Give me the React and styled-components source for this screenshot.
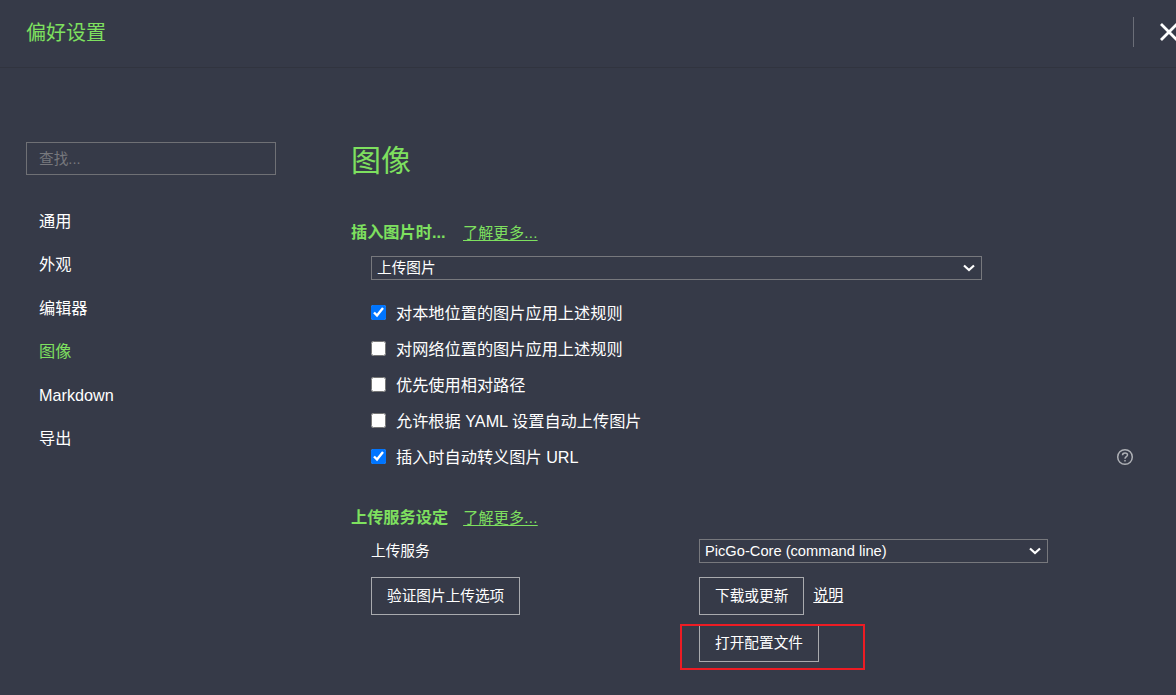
import React from 'react';
import styled, { createGlobalStyle } from 'styled-components';

const GlobalStyle = createGlobalStyle`
  html, body {
    margin: 0;
    padding: 0;
    height: 100%;
    background: #363a48;
    overflow: hidden;
  }
  body {
    font-family: "Liberation Sans", "Noto Sans CJK SC", sans-serif;
    color: #fff;
  }
`;

const green = '#7ee05f';

const chevron = `url("data:image/svg+xml,%3Csvg xmlns='http://www.w3.org/2000/svg' width='12' height='8' viewBox='0 0 12 8'%3E%3Cpath d='M1 1.5 L6 6 L11 1.5' fill='none' stroke='white' stroke-width='2.2'/%3E%3C/svg%3E")`;

const Page = styled.div`
  width: 1176px;
  height: 695px;
  position: relative;
  overflow: hidden;
  background: #363a48;
`;

const Header = styled.header`
  box-sizing: border-box;
  height: 68px;
  display: flex;
  align-items: center;
  justify-content: space-between;
  padding: 0 0 4px 26px;
  border-bottom: 1px solid #31343f;
`;

const HeaderTitle = styled.h1`
  margin: 0;
  font-size: 20px;
  font-weight: 400;
  color: ${green};
`;

const HeaderActions = styled.div`
  display: flex;
  align-items: center;
  margin-right: -5px;
`;

const Divider = styled.div`
  width: 1px;
  height: 30px;
  background: #6b6e78;
  margin-right: 23px;
`;

const CloseIcon = styled.svg`
  display: block;
  width: 24px;
  height: 24px;
`;

const Body = styled.div`
  display: flex;
`;

const Sidebar = styled.aside`
  width: 250px;
  margin-left: 26px;
  padding-top: 74px;
`;

const Search = styled.input`
  display: block;
  box-sizing: border-box;
  width: 250px;
  height: 33px;
  padding: 0 12px;
  background: transparent;
  border: 1px solid #6f7075;
  border-radius: 0;
  color: #fff;
  font: 14.67px "Liberation Sans", "Noto Sans CJK SC", sans-serif;
  outline: none;

  &::placeholder {
    color: #77787d;
    opacity: 1;
  }
`;

const Nav = styled.nav`
  margin-top: 25px;
  display: flex;
  flex-direction: column;
`;

const NavItem = styled.a`
  height: 43.4px;
  line-height: 43.4px;
  padding-left: 13px;
  font-size: 16.2px;
  color: ${props => (props.$active ? green : '#fff')};
`;

const Main = styled.main`
  width: 782px;
  margin-left: 75px;
  padding-top: 70px;
`;

const PageTitle = styled.h2`
  margin: 0;
  height: 46px;
  line-height: 46px;
  font-size: 30px;
  font-weight: 400;
  color: ${green};
`;

const SectionHeading = styled.div`
  display: flex;
  align-items: center;
  gap: 15px;
  height: 24px;
  margin-top: ${props => props.$top}px;
`;

const SectionTitle = styled.h3`
  margin: 0;
  min-width: 97px;
  font-size: 16.2px;
  font-weight: 700;
  color: ${green};
`;

const MoreLink = styled.a`
  font-size: 15px;
  letter-spacing: 0.3px;
  color: ${green};
  text-decoration: underline;
  text-underline-offset: 2px;
`;

const Indented = styled.div`
  margin-left: 20px;
`;

const Select = styled.select`
  display: block;
  box-sizing: border-box;
  width: ${props => props.$width}px;
  height: 24px;
  margin-top: ${props => props.$top || 0}px;
  padding: 0 0 0 5px;
  appearance: none;
  background: transparent ${chevron} no-repeat right 6px center;
  border: 1px solid #77787d;
  border-radius: 0;
  color: #fff;
  font: 14.67px "Liberation Sans", "Noto Sans CJK SC", sans-serif;
  outline: none;
`;

const CheckList = styled.div`
  margin-top: 15px;
  display: flex;
  flex-direction: column;
`;

const CheckRow = styled.div`
  height: 36px;
  display: flex;
  align-items: center;
  justify-content: space-between;
`;

const CheckLabel = styled.label`
  display: flex;
  align-items: center;
  gap: 10px;
  font-size: 16.2px;
  line-height: 22px;
  padding-bottom: 1px;
  color: #fff;
`;

const Checkbox = styled.input`
  width: 15px;
  height: 15px;
  margin: -1px 0 0 0;
  accent-color: #0075ff;
`;

const HelpIcon = styled.svg`
  display: block;
  width: 18px;
  height: 18px;
  margin-right: -1px;
`;

const ServiceGrid = styled.div`
  display: grid;
  grid-template-columns: 328px 349px;
  margin-top: 11px;
`;

const ServiceColumn = styled.div`
  display: flex;
  flex-direction: column;
  align-items: flex-start;
`;

const ServiceLabel = styled.div`
  height: 24px;
  line-height: 24px;
  font-size: 14.67px;
  color: #fff;
`;

const Button = styled.button`
  box-sizing: border-box;
  height: 38px;
  padding: 0 15px 3px;
  background: transparent;
  border: 1px solid #a9aaae;
  border-radius: 0;
  color: #fff;
  font: 14.67px "Liberation Sans", "Noto Sans CJK SC", sans-serif;
`;

const ButtonRow = styled.div`
  display: flex;
  align-items: center;
  gap: 9px;
  margin-top: ${props => props.$top}px;
`;

const DocLink = styled.a`
  margin-bottom: 6px;
  font-size: 15px;
  color: #fff;
  text-decoration: underline;
  text-underline-offset: 2px;
`;

// red annotation drawn over the screenshot
const Highlight = styled.div`
  position: absolute;
  left: 680px;
  top: 624px;
  width: 181px;
  height: 42px;
  border: 2px solid #ed1c24;
`;

const navItems = ['通用', '外观', '编辑器', '图像', 'Markdown', '导出'];

const imageRules = [
  { label: '对本地位置的图片应用上述规则', checked: true },
  { label: '对网络位置的图片应用上述规则', checked: false },
  { label: '优先使用相对路径', checked: false },
  { label: '允许根据 YAML 设置自动上传图片', checked: false },
  { label: '插入时自动转义图片 URL', checked: true, help: true }
];

const App = () => {
  return (
    <Page>
      <GlobalStyle />
      <Header>
        <HeaderTitle>偏好设置</HeaderTitle>
        <HeaderActions>
          <Divider />
          <CloseIcon viewBox="0 0 24 24" fill="none" stroke="#fff" strokeWidth="2.8">
            <path d="M4 4 L20 20 M20 4 L4 20" />
          </CloseIcon>
        </HeaderActions>
      </Header>
      <Body>
        <Sidebar>
          <Search placeholder="查找..." />
          <Nav>
            {navItems.map(item => (
              <NavItem key={item} $active={item === '图像'}>{item}</NavItem>
            ))}
          </Nav>
        </Sidebar>
        <Main>
          <PageTitle>图像</PageTitle>
          <SectionHeading $top={35}>
            <SectionTitle>插入图片时...</SectionTitle>
            <MoreLink>了解更多...</MoreLink>
          </SectionHeading>
          <Indented>
            <Select $width={611} $top={13} defaultValue="upload">
              <option value="upload">上传图片</option>
            </Select>
            <CheckList>
              {imageRules.map(rule => (
                <CheckRow key={rule.label}>
                  <CheckLabel>
                    <Checkbox type="checkbox" defaultChecked={rule.checked} />
                    {rule.label}
                  </CheckLabel>
                  {rule.help && (
                    <HelpIcon viewBox="0 0 18 18" fill="none" stroke="#aeb0b5" strokeWidth="1.5">
                      <circle cx="9" cy="9" r="7.3" />
                      <path d="M6.5 7.2 C6.5 5.6 7.7 4.9 9 4.9 C10.4 4.9 11.5 5.7 11.5 7 C11.5 8.6 9 8.8 9 10.8" />
                      <path d="M9 12.1 V13.6" />
                    </HelpIcon>
                  )}
                </CheckRow>
              ))}
            </CheckList>
          </Indented>
          <SectionHeading $top={29}>
            <SectionTitle>上传服务设定</SectionTitle>
            <MoreLink>了解更多...</MoreLink>
          </SectionHeading>
          <Indented>
            <ServiceGrid>
              <ServiceColumn>
                <ServiceLabel>上传服务</ServiceLabel>
                <ButtonRow $top={14}>
                  <Button>验证图片上传选项</Button>
                </ButtonRow>
              </ServiceColumn>
              <ServiceColumn>
                <Select $width={349} defaultValue="picgo">
                  <option value="picgo">PicGo-Core (command line)</option>
                </Select>
                <ButtonRow $top={14}>
                  <Button>下载或更新</Button>
                  <DocLink>说明</DocLink>
                </ButtonRow>
                <ButtonRow $top={9}>
                  <Button>打开配置文件</Button>
                </ButtonRow>
              </ServiceColumn>
            </ServiceGrid>
          </Indented>
        </Main>
      </Body>
      <Highlight />
    </Page>
  );
};

export default App;
